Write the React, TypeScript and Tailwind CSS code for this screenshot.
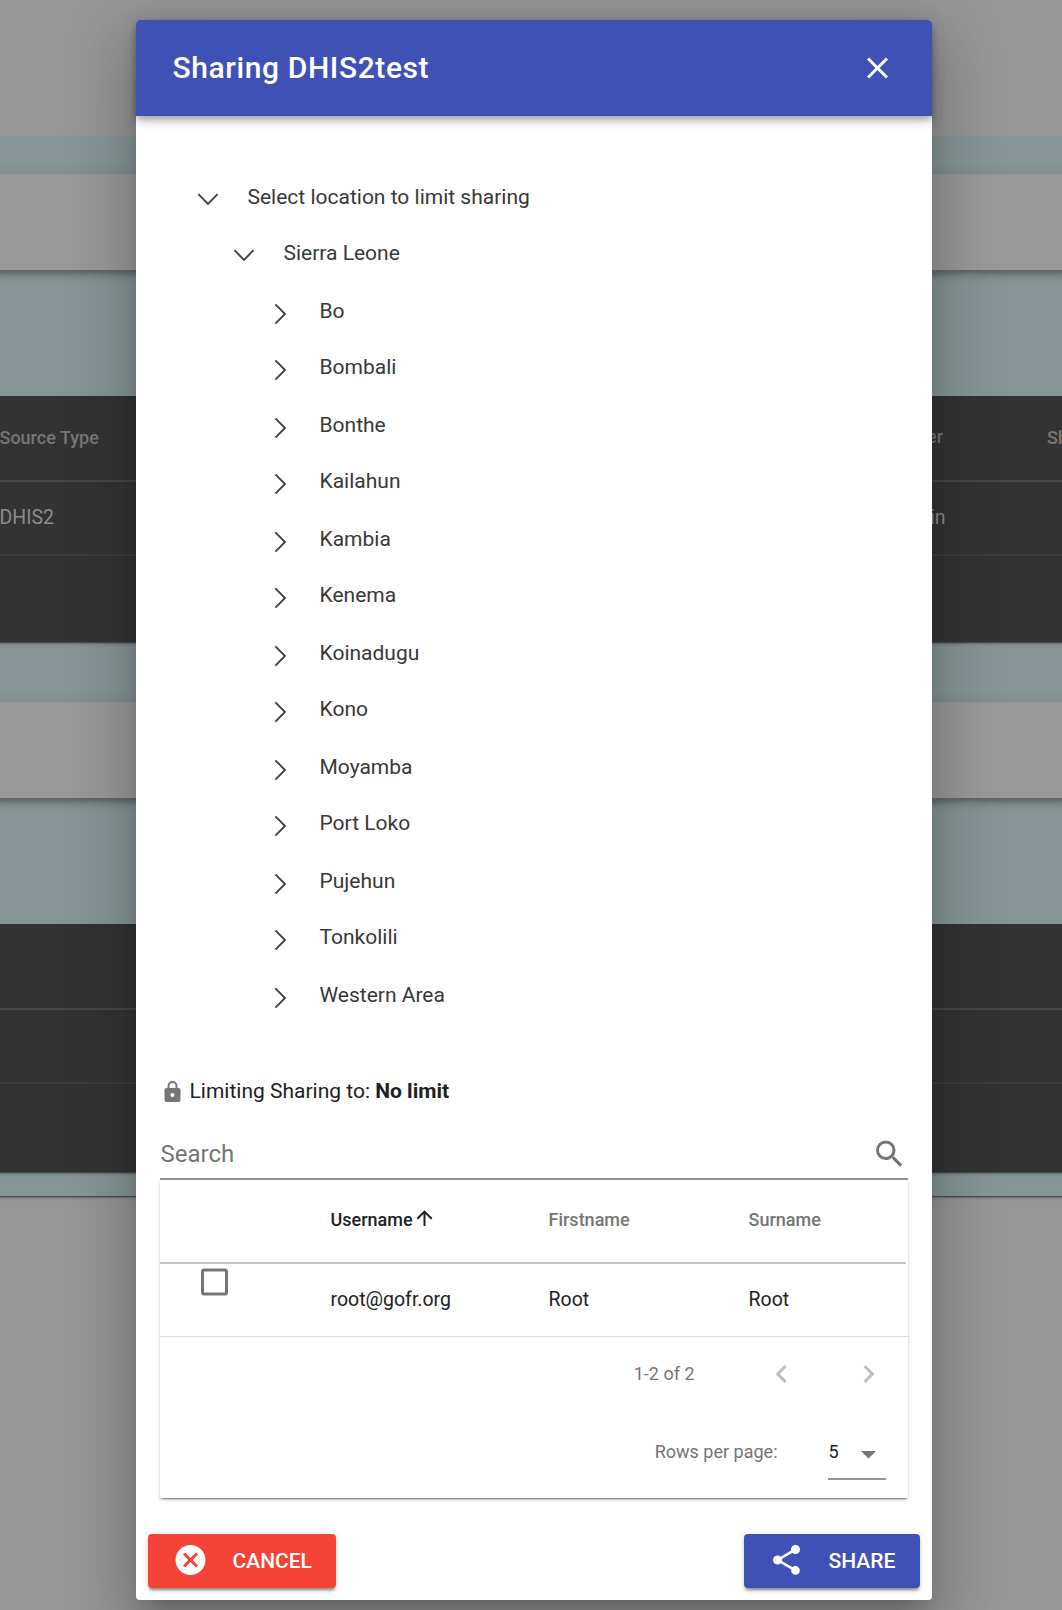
import React from "react";

const P = {
  close: "M19,6.41L17.59,5L12,10.59L6.41,5L5,6.41L10.59,12L5,17.59L6.41,19L12,13.41L17.59,19L19,17.59L13.41,12L19,6.41Z",
  lock: "M12,17A2,2 0 0,0 14,15C14,13.89 13.1,13 12,13A2,2 0 0,0 10,15A2,2 0 0,0 12,17M18,8A2,2 0 0,1 20,10V20A2,2 0 0,1 18,22H6A2,2 0 0,1 4,20V10C4,8.89 4.9,8 6,8H7V6A5,5 0 0,1 12,1A5,5 0 0,1 17,6V8H18M12,3A3,3 0 0,0 9,6V8H15V6A3,3 0 0,0 12,3Z",
  search: "M9.5,3A6.5,6.5 0 0,1 16,9.5C16,11.11 15.41,12.59 14.44,13.73L14.71,14H15.5L20.5,19L19,20.5L14,15.5V14.71L13.73,14.44C12.59,15.41 11.11,16 9.5,16A6.5,6.5 0 0,1 3,9.5A6.5,6.5 0 0,1 9.5,3M9.5,5C7,5 5,7 5,9.5C5,12 7,14 9.5,14C12,14 14,12 14,9.5C14,7 12,5 9.5,5Z",
  up: "M13,20H11V8L5.5,13.5L4.08,12.08L12,4.16L19.92,12.08L18.5,13.5L13,8V20Z",
  box: "M19,3H5C3.89,3 3,3.89 3,5V19A2,2 0 0,0 5,21H19A2,2 0 0,0 21,19V5C21,3.89 20.1,3 19,3M19,5V19H5V5H19Z",
  left: "M15.41,16.58L10.83,12L15.41,7.41L14,6L8,12L14,18L15.41,16.58Z",
  right: "M8.59,16.58L13.17,12L8.59,7.41L10,6L16,12L10,18L8.59,16.58Z",
  caret: "M7,10L12,15L17,10H7Z",
  cancel: "M12,2C17.53,2 22,6.47 22,12C22,17.53 17.53,22 12,22C6.47,22 2,17.53 2,12C2,6.47 6.47,2 12,2M15.59,7L12,10.59L8.41,7L7,8.41L10.59,12L7,15.59L8.41,17L12,13.41L15.59,17L17,15.59L13.41,12L17,8.41L15.59,7Z",
  share: "M18,16.08C17.24,16.08 16.56,16.38 16.04,16.85L8.91,12.7C8.96,12.47 9,12.24 9,12C9,11.76 8.96,11.53 8.91,11.3L15.96,7.19C16.5,7.69 17.21,8 18,8A3,3 0 0,0 21,5A3,3 0 0,0 18,2A3,3 0 0,0 15,5C15,5.24 15.04,5.47 15.09,5.7L8.04,9.81C7.5,9.31 6.79,9 6,9A3,3 0 0,0 3,12A3,3 0 0,0 6,15C6.79,15 7.5,14.69 8.04,14.19L15.16,18.34C15.11,18.55 15.08,18.77 15.08,19C15.08,20.61 16.39,21.91 18,21.91C19.61,21.91 20.92,20.61 20.92,19A2.92,2.92 0 0,0 18,16.08Z",
};

function Icon({ d, className = "" }: { d: string; className?: string }) {
  return (
    <svg viewBox="0 0 24 24" fill="currentColor" className={`block shrink-0 translate-x-[0.5px] ${className}`}>
      <path d={d} />
    </svg>
  );
}

function Arrow({ open }: { open?: boolean }) {
  return (
    <svg viewBox="0 0 24 24" fill="none" stroke="#424242" strokeWidth="1.9" className="block size-6 shrink-0">
      {open ? <path d="M2.4 7.2L12 16.8L21.6 7.2" /> : <path d="M7.4 2.4L17 12L7.4 21.6" />}
    </svg>
  );
}

const districts = ["Bo", "Bombali", "Bonthe", "Kailahun", "Kambia", "Kenema", "Koinadugu", "Kono", "Moyamba", "Port Loko", "Pujehun", "Tonkolili", "Western Area"];

function Toolbar() {
  return <div className="relative z-10 h-24 bg-[#999] shadow-[0_3px_6px_-1.5px_rgba(0,0,0,0.2),0_6px_7.5px_0_rgba(0,0,0,0.14),0_1.5px_15px_0_rgba(0,0,0,0.12)]" />;
}

const darkCard = "flex flex-col bg-[#333] shadow-[0_3px_1.5px_-1.5px_rgba(0,0,0,0.25),0_1.5px_1.5px_0_rgba(0,0,0,0.2),0_1.5px_4px_0_rgba(0,0,0,0.15)]";

export default function App() {
  return (
    <div className="relative h-[1610px] w-[1062px] overflow-hidden bg-[#969696] font-[Roboto,sans-serif]">
      <div className="flex flex-col pt-[137px]">
        <div className="-mx-2 flex h-[1059px] flex-col bg-[#879596] pt-[37px] shadow-[0_3px_1.5px_-1.5px_rgba(0,0,0,0.25),0_1.5px_1.5px_0_rgba(0,0,0,0.2),0_1.5px_4px_0_rgba(0,0,0,0.15)]">
          <Toolbar />
          <div className={`mt-[126px] h-[246px] ${darkCard}`}>
            <div className="flex h-[86px] items-center border-b-2 border-[#484848] px-2 text-[18px] font-medium text-[#787878]">
              <span className="-ml-[0.5px] w-[927.5px] shrink-0 whitespace-nowrap pb-px">Source Type</span>
              <span className="w-[120px] shrink-0 pb-[3px]">er</span>
              <span className="shrink-0 pb-px">Sh</span>
            </div>
            <div className="flex h-[74px] items-center border-b-2 border-[#3c3c3c] px-2 text-[19.5px] text-[#8c8c8c]">
              <span className="-ml-[0.5px] w-[930.5px] shrink-0">DHIS2</span>
              <span>in</span>
            </div>
          </div>
          <div className="h-[60px]" />
          <Toolbar />
          <div className={`mt-[126px] h-[248px] ${darkCard}`}>
            <div className="h-[86px] border-b-2 border-[#484848]" />
            <div className="h-[74px] border-b-2 border-[#3c3c3c]" />
          </div>
        </div>
      </div>

      <div className="absolute left-[136px] top-5 z-20 flex h-[1580px] w-[796px] flex-col rounded-[4px] bg-white shadow-[0_16px_22px_-10px_rgba(0,0,0,0.2),0_36px_57px_4px_rgba(0,0,0,0.14),0_13px_69px_12px_rgba(0,0,0,0.12)]">
        <header className="flex h-24 items-center justify-between rounded-t-[4px] bg-[#3f51b5] pl-[36.5px] pr-[37px] text-white shadow-[0_3px_6px_-1.5px_rgba(0,0,0,0.2),0_6px_7.5px_0_rgba(0,0,0,0.14),0_1.5px_15px_0_rgba(0,0,0,0.12)]">
          <h1 className="pb-[2px] text-[30px] font-medium tracking-[0.02em]">Sharing DHIS2test</h1>
          <Icon d={P.close} className="size-9" />
        </header>

        <ul className="mt-[54px] flex flex-col text-[21px] text-[#383838]">
          <li className="flex h-14 items-center pl-[60px]">
            <span className="pt-px"><Arrow open /></span>
            <span className="pl-[27.5px]">Select location to limit sharing</span>
          </li>
          <li className="flex h-[57px] items-center pb-[2px] pl-24">
            <span className="pt-[3px]"><Arrow open /></span>
            <span className="pl-[27.5px]">Sierra Leone</span>
          </li>
          {districts.map((name) => (
            <li key={name} className="flex h-14 items-center pl-[132px] odd:h-[58px] even:pb-[2px]">
              <span className="pt-[3px]"><Arrow /></span>
              <span className="pl-[27.5px]">{name}</span>
            </li>
          ))}
        </ul>

        <div className="mt-[37px] flex h-[60px] items-center pl-6 text-[21px] text-[#212121]">
          <Icon d={P.lock} className="size-6 text-[#757575]" />
          <span className="pl-[5.5px]">Limiting Sharing to: <b className="font-bold">No limit</b></span>
        </div>

        <div className="mx-6 flex h-[58px] items-center justify-between border-b-2 border-[#949494] pr-px pt-2 text-[24px] text-[#757575]">
          <span className="pl-[0.5px]">Search</span>
          <Icon d={P.search} className="size-9" />
        </div>
        <section className="mx-6 flex h-[318px] flex-col shadow-[0_3px_1.5px_-1.5px_rgba(0,0,0,0.25),0_1.5px_1.5px_0_rgba(0,0,0,0.18),0_1.5px_4.5px_0_rgba(0,0,0,0.12)]">
          <div className="mr-[2px] grid h-[84px] grid-cols-[170.5px_218px_200px_1fr] items-center border-b-2 border-[#c4c4c4] pb-[4px] text-[18px] font-medium text-[#757575]">
            <span />
            <span className="flex items-center text-[#212121]">Username<Icon d={P.up} className="-ml-[0.5px] mb-[3px] size-6" /></span>
            <span>Firstname</span>
            <span>Surname</span>
          </div>
          <div className="mb-px grid h-[73px] grid-cols-[170.5px_218px_200px_1fr] items-center border-b border-[#dcdcdc] text-[19.5px] text-[#212121]">
            <Icon d={P.box} className="ml-9 size-9 self-start text-[#757575]" />
            <span>root@gofr.org</span>
            <span>Root</span>
            <span>Root</span>
          </div>
          <div className="flex h-[74px] items-center justify-end pb-[3px] pr-[22px] text-[18px] text-[#757575]">
            <span>1-2 of 2</span>
            <Icon d={P.left} className="ml-[68.5px] size-9 text-[#bdbdbd]" />
            <Icon d={P.right} className="ml-[51px] size-9 text-[#bdbdbd]" />
          </div>
          <div className="flex h-[80px] items-center justify-end pb-[2px] pr-[22px] text-[18px] text-[#757575]">
            <span>Rows per page:</span>
            <div className="ml-[50.5px] mt-[10px] flex h-[48px] w-[58px] items-center justify-between border-b-2 border-[#949494] pb-[3px] text-[#212121]">
              <span className="pb-[5px] pl-[0.5px]">5</span>
              <Icon d={P.caret} className="size-9 text-[#757575]" />
            </div>
          </div>
        </section>

        <footer className="mt-9 flex items-center justify-between px-3 text-[21px] font-medium text-white">
          <button className="flex h-[54px] w-[188px] items-center rounded-[4px] bg-[#f44336] pl-6 shadow-[0_4px_2px_-2px_rgba(0,0,0,0.25),0_3px_3px_0_rgba(0,0,0,0.14),0_1.5px_7.5px_0_rgba(0,0,0,0.12)]">
            <Icon d={P.cancel} className="mb-[2px] size-9" />
            <span className="pl-[24.5px] pt-px">CANCEL</span>
          </button>
          <button className="flex h-[54px] w-[176px] items-center rounded-[4px] bg-[#3f51b5] pl-6 shadow-[0_4px_2px_-2px_rgba(0,0,0,0.25),0_3px_3px_0_rgba(0,0,0,0.14),0_1.5px_7.5px_0_rgba(0,0,0,0.12)]">
            <Icon d={P.share} className="mb-[2px] size-9" />
            <span className="pl-[24.5px] pt-px">SHARE</span>
          </button>
        </footer>
      </div>
    </div>
  );
}
